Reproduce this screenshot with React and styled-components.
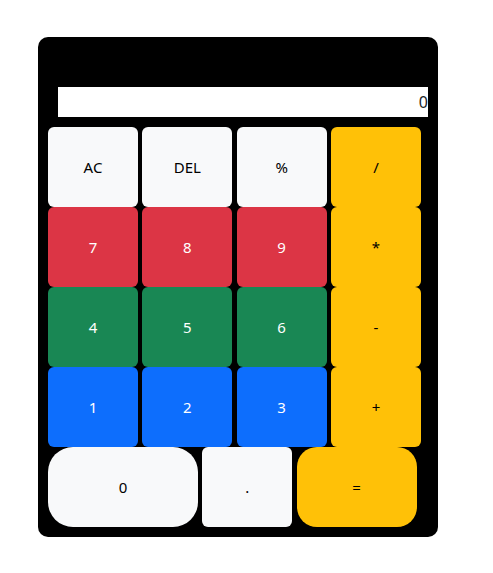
import styled, { createGlobalStyle } from 'styled-components';

const GlobalStyle = createGlobalStyle`
    body {
        margin: 0;
        background: #fff;
        font-family: "Noto Sans", "Open Sans", sans-serif;
    }
`;

const Page = styled.div`
    padding: 37px 0 0 38px;
`;

const Calculator = styled.div`
    width: 400px;
    height: 500px;
    box-sizing: border-box;
    background: #000;
    border-radius: 10px;
    padding: 50px 10px 10px 10px;
`;

const Display = styled.input`
    display: block;
    box-sizing: border-box;
    width: 370px;
    height: 30px;
    margin: 0 0 10px 10px;
    border: none;
    outline: none;
    padding: 0;
    background: #fff;
    color: #212529;
    text-align: right;
    font-family: inherit;
    font-size: 16px;
`;

const Row = styled.div`
    display: flex;
    gap: 4.33px;
`;

const colors = {
    light: ['#f8f9fa', '#000'],
    danger: ['#dc3545', '#fff'],
    success: ['#198754', '#fff'],
    primary: ['#0d6efd', '#fff'],
    warning: ['#ffc107', '#000'],
};

const Key = styled.button`
    width: ${(p) => p.$w || 90}px;
    height: 80px;
    flex: none;
    border: none;
    border-radius: ${(p) => p.$r || 6}px;
    background: ${(p) => colors[p.$v][0]};
    color: ${(p) => colors[p.$v][1]};
    font-family: inherit;
    font-size: 15px;
    padding: 0;
    cursor: pointer;
`;

const rows = [
    [['AC', 'light'], ['DEL', 'light'], ['%', 'light'], ['/', 'warning']],
    [['7', 'danger'], ['8', 'danger'], ['9', 'danger'], ['*', 'warning']],
    [['4', 'success'], ['5', 'success'], ['6', 'success'], ['-', 'warning']],
    [['1', 'primary'], ['2', 'primary'], ['3', 'primary'], ['+', 'warning']],
];

export default function App() {
    return (
        <Page>
            <GlobalStyle />
            <Calculator>
                <Display value="0" readOnly />
                {rows.map((r, i) => (
                    <Row key={i}>
                        {r.map(([label, v]) => (
                            <Key key={label} $v={v}>{label}</Key>
                        ))}
                    </Row>
                ))}
                <Row>
                    <Key $v="light" $w={150} $r={25}>0</Key>
                    <Key $v="light">.</Key>
                    <Key $v="warning" $w={120} $r={20}>=</Key>
                </Row>
            </Calculator>
        </Page>
    );
}
